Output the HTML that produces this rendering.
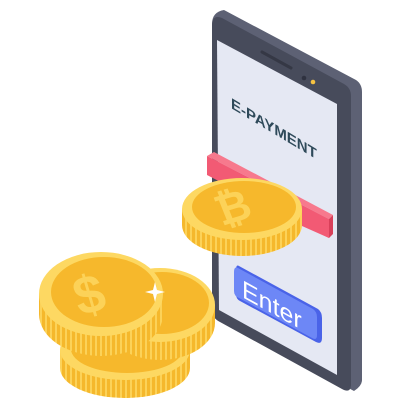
<!DOCTYPE html>
<html><head><style>html,body{margin:0;padding:0;background:#fff;width:400px;height:400px;overflow:hidden}</style></head>
<body>
<svg width="400" height="400" viewBox="0 0 400 400" xmlns="http://www.w3.org/2000/svg">
<defs>
<pattern id="st" width="5" height="10" patternUnits="userSpaceOnUse"><rect width="5" height="10" fill="#f5b82c"/><rect width="2" height="10" fill="#fcd258"/></pattern>
</defs>
<!-- phone -->
<path d="M212,24 Q212,12 224,10 L356,80 Q362,84 362,92 L362,380 Q362,386 354,391 L220,320 Q212,316 212,308 Z" fill="#5d6174"/>
<path d="M212,26 Q212,14 222,18 L344,84 Q351,88 351,96 L351,384 Q351,394 342,389 L220,322 Q212,318 212,310 Z" fill="#474b5b"/>
<polygon points="217,40 337,104 337,375 219,310" fill="#e5e8f3"/>
<line x1="262" y1="52" x2="291" y2="68" stroke="#353845" stroke-width="3" stroke-linecap="round"/>
<circle cx="304" cy="78" r="2.3" fill="#2f3240"/>
<circle cx="313" cy="82" r="2.3" fill="#f5c242"/>
<text x="0" y="0" transform="matrix(1,0.6,0,1,231,108)" font-family="Liberation Sans, sans-serif" font-weight="bold" font-size="15" fill="#2f4a5a">E-PAYMENT</text>
<!-- enter button -->
<path d="M239,266 L318,309 Q322,312 322,318 L322,338 Q322,345 316,342 L240,301 Q236,299 236,294 L236,270 Q236,264 239,266 Z" fill="#4a63e8"/>
<path d="M238,268 L313,309 Q317,312 317,317 L317,335 Q317,341 312,338 L239,298 Q234,296 234,291 L234,272 Q234,266 238,268 Z" fill="#6d87f6"/>
<text x="0" y="0" transform="matrix(1,0.55,0,1,242,297)" font-family="Liberation Sans, sans-serif" font-size="25" fill="#fff">Enter</text>
<!-- red slot -->
<polygon points="207,156 214,152 333,215 329,219" fill="#f7798d"/>
<polygon points="207,156 329,219 329,238 207,175" fill="#f25a74"/>
<polygon points="329,219 333,215 333,234 329,238" fill="#d9405a"/>
<!-- bitcoin coin -->
<path d="M182,209 v16 a60,31 0 0 0 120,0 v-16 z" fill="url(#st)"/>
<ellipse cx="242" cy="209" rx="60" ry="31" fill="#fdd862"/>
<ellipse cx="244" cy="207" rx="52" ry="26" fill="#f6b82c"/>
<text x="0" y="0" transform="matrix(1,-0.3,0.4,1,222,226)" font-family="Liberation Sans, sans-serif" font-weight="bold" font-size="40" fill="#fcd258">₿</text>
<polygon points="302,209 329,222 329,238 302,226" fill="#f25a74"/>
<!-- bottom coin -->
<path d="M60,350 v18 a65,30 0 0 0 130,0 v-18 z" fill="url(#st)"/>
<ellipse cx="125" cy="350" rx="65" ry="30" fill="#fdd862"/>
<ellipse cx="127" cy="349" rx="56" ry="24" fill="#f6b82c"/>
<!-- back right coin -->
<path d="M105,305 v18 a55,37 0 0 0 110,0 v-18 z" fill="url(#st)"/>
<ellipse cx="160" cy="305" rx="55" ry="37" fill="#fdd862"/>
<ellipse cx="162" cy="303" rx="47" ry="31" fill="#f6b82c"/>
<!-- front coin -->
<path d="M39,294 v20 a62,42 0 0 0 124,0 v-20 z" fill="url(#st)"/>
<ellipse cx="101" cy="294" rx="62" ry="42" fill="#fdd862"/>
<ellipse cx="104" cy="292" rx="53" ry="35" fill="#f6b82c"/>
<text x="0" y="0" transform="matrix(1,-0.25,0.3,1,80,316)" font-family="Liberation Sans, sans-serif" font-weight="bold" font-size="52" fill="#fcd258">$</text>
<!-- sparkle -->
<path d="M155,282 L157,290 L165,292 L157,294 L155,302 L153,294 L145,292 L153,290 Z" fill="#fff"/>
</svg>
</body></html>
